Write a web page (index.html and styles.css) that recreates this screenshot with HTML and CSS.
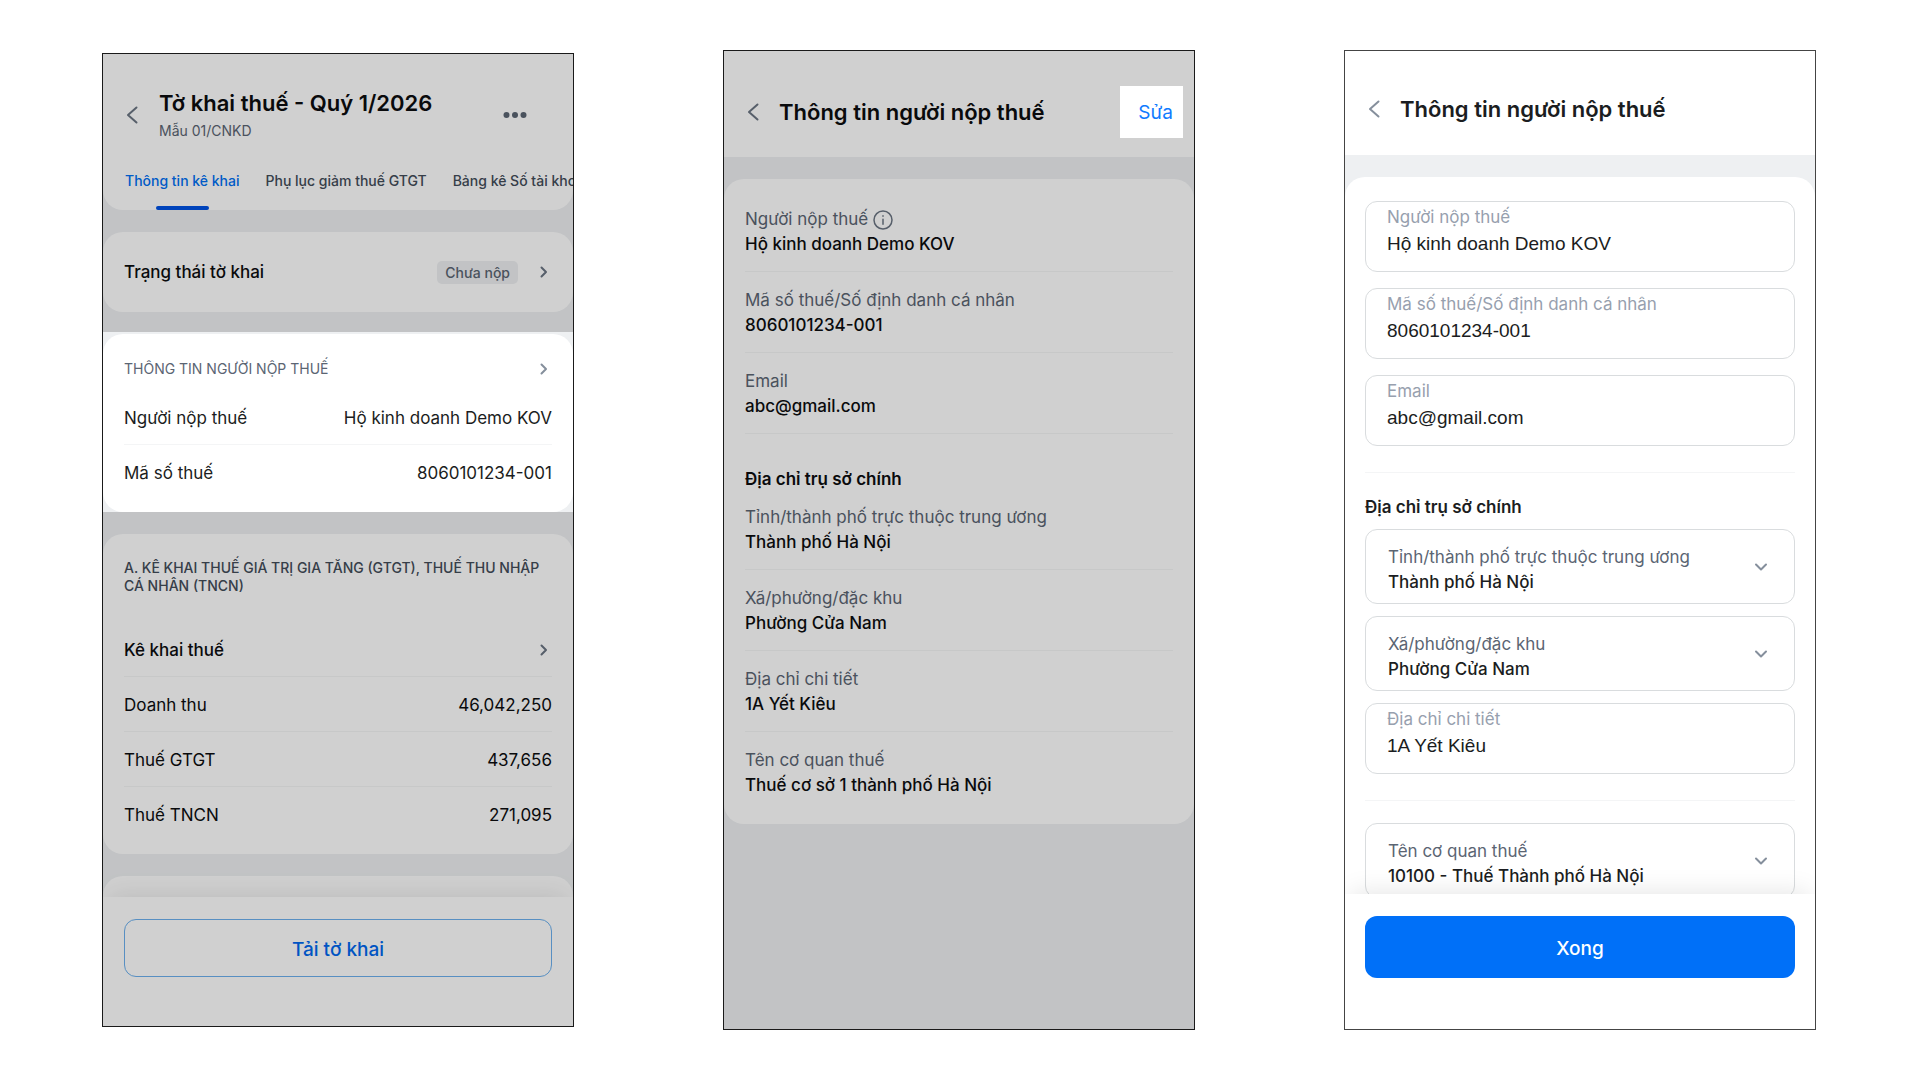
FILE: index.html
```html
<!DOCTYPE html>
<html lang="vi">
<head>
<meta charset="utf-8">
<meta name="viewport" content="width=device-width, initial-scale=1">
<title>Thông tin người nộp thuế</title>
<link rel="stylesheet" href="styles.css">
</head>
<body>
<main class="board">

  <section class="phone phone--short phone--dimmed" aria-label="Tờ khai thuế">
    <header class="summary-head">
      <div class="summary-bar">
        <button class="icon-button" type="button" aria-label="Quay lại">
          <svg class="icon-back" viewBox="0 0 14 20"><path d="M11.500 2.500 3 10l8.500 7.500"/></svg>
        </button>
        <div class="summary-title">
          <h1 class="title">Tờ khai thuế - Quý 1/2026</h1>
          <p class="subtitle">Mẫu 01/CNKD</p>
        </div>
        <button class="icon-button" type="button" aria-label="Thêm">
          <svg class="icon-dots" viewBox="0 0 24 8"><circle cx="3.500" cy="4" r="3"/><circle cx="12" cy="4" r="3"/><circle cx="20.500" cy="4" r="3"/></svg>
        </button>
      </div>
      <nav class="tabs">
        <a class="tab tab--active" href="#ke-khai">Thông tin kê khai</a>
        <a class="tab" href="#phu-luc">Phụ lục giảm thuế GTGT</a>
        <a class="tab" href="#bang-ke">Bảng kê Số tài khoản</a>
      </nav>
    </header>

    <div class="phone-body">
      <div class="card card--status">
        <span class="status-name">Trạng thái tờ khai</span>
        <span class="badge">Chưa nộp</span>
        <svg class="icon-next" viewBox="0 0 18 18"><path d="m7.500 4.500 4.500 4.500-4.500 4.500"/></svg>
      </div>

      <div class="spotlight">
        <div class="card card--rows" id="ke-khai">
          <div class="card-head">
            <h2 class="overline">THÔNG TIN NGƯỜI NỘP THUẾ</h2>
            <svg class="icon-next" viewBox="0 0 18 18"><path d="m7.500 4.500 4.500 4.500-4.500 4.500"/></svg>
          </div>
          <dl class="rows">
            <div class="row"><dt>Người nộp thuế</dt><dd>Hộ kinh doanh Demo KOV</dd></div>
            <div class="row"><dt>Mã số thuế</dt><dd>8060101234-001</dd></div>
          </dl>
        </div>
      </div>

      <div class="card card--rows">
        <h2 class="overline overline--strong">A. KÊ KHAI THUẾ GIÁ TRỊ GIA TĂNG (GTGT), THUẾ THU NHẬP CÁ NHÂN (TNCN)</h2>
        <dl class="rows">
          <div class="row row--lead">
            <dt>Kê khai thuế</dt>
            <dd><svg class="icon-next" viewBox="0 0 18 18"><path d="m7.500 4.500 4.500 4.500-4.500 4.500"/></svg></dd>
          </div>
          <div class="row"><dt>Doanh thu</dt><dd>46,042,250</dd></div>
          <div class="row"><dt>Thuế GTGT</dt><dd>437,656</dd></div>
          <div class="row"><dt>Thuế TNCN</dt><dd>271,095</dd></div>
        </dl>
      </div>

      <div class="card card--next"></div>
    </div>

    <footer class="phone-foot phone-foot--outline">
      <button class="button button--outline" type="button">Tải tờ khai</button>
    </footer>
  </section>

  <section class="phone phone--dimmed" aria-label="Xem thông tin người nộp thuế">
    <header class="page-head page-head--action">
      <button class="icon-button" type="button" aria-label="Quay lại">
        <svg class="icon-back" viewBox="0 0 14 20"><path d="M11.500 2.500 3 10l8.500 7.500"/></svg>
      </button>
      <h1 class="title">Thông tin người nộp thuế</h1>
      <button class="edit" type="button">Sửa</button>
    </header>

    <div class="phone-body">
      <div class="card card--details">
        <dl class="details">
          <div class="detail">
            <dt>Người nộp thuế
              <svg class="icon-info" viewBox="0 0 20 20"><circle cx="10" cy="10" r="9"/><path d="M10 9.200v5M10 5.700v.6"/></svg>
            </dt>
            <dd>Hộ kinh doanh Demo KOV</dd>
          </div>
          <div class="detail"><dt>Mã số thuế/Số định danh cá nhân</dt><dd>8060101234-001</dd></div>
          <div class="detail"><dt>Email</dt><dd>abc@gmail.com</dd></div>
        </dl>
        <h2 class="group-title group-title--details">Địa chỉ trụ sở chính</h2>
        <dl class="details">
          <div class="detail"><dt>Tỉnh/thành phố trực thuộc trung ương</dt><dd>Thành phố Hà Nội</dd></div>
          <div class="detail"><dt>Xã/phường/đặc khu</dt><dd>Phường Cửa Nam</dd></div>
          <div class="detail"><dt>Địa chỉ chi tiết</dt><dd>1A Yết Kiêu</dd></div>
          <div class="detail detail--last"><dt>Tên cơ quan thuế</dt><dd>Thuế cơ sở 1 thành phố Hà Nội</dd></div>
        </dl>
      </div>
    </div>
  </section>

  <form class="phone phone--form" aria-label="Sửa thông tin người nộp thuế">
    <header class="page-head">
      <button class="icon-button" type="button" aria-label="Quay lại">
        <svg class="icon-back" viewBox="0 0 14 20"><path d="M11.500 2.500 3 10l8.500 7.500"/></svg>
      </button>
      <h1 class="title">Thông tin người nộp thuế</h1>
    </header>

    <div class="phone-body">
      <div class="card card--form">
        <div class="field-group field-group--loose">
          <div class="field">
            <label class="field-label" for="payer">Người nộp thuế</label>
            <input class="field-input" id="payer" type="text" value="Hộ kinh doanh Demo KOV">
          </div>
          <div class="field">
            <label class="field-label" for="tax-code">Mã số thuế/Số định danh cá nhân</label>
            <input class="field-input" id="tax-code" type="text" value="8060101234-001">
          </div>
          <div class="field">
            <label class="field-label" for="email">Email</label>
            <input class="field-input" id="email" type="email" value="abc@gmail.com">
          </div>
        </div>

        <hr class="divider">

        <h2 class="group-title group-title--form">Địa chỉ trụ sở chính</h2>
        <div class="field-group">
          <div class="picker">
            <label class="picker-label" for="province">Tỉnh/thành phố trực thuộc trung ương</label>
            <select class="picker-select" id="province"><option>Thành phố Hà Nội</option></select>
            <svg class="icon-down" viewBox="0 0 18 18"><path d="m4 6.500 5 5 5-5"/></svg>
          </div>
          <div class="picker">
            <label class="picker-label" for="ward">Xã/phường/đặc khu</label>
            <select class="picker-select" id="ward"><option>Phường Cửa Nam</option></select>
            <svg class="icon-down" viewBox="0 0 18 18"><path d="m4 6.500 5 5 5-5"/></svg>
          </div>
          <div class="field">
            <label class="field-label" for="street">Địa chỉ chi tiết</label>
            <input class="field-input" id="street" type="text" value="1A Yết Kiêu">
          </div>
        </div>

        <hr class="divider">

        <div class="picker">
          <label class="picker-label" for="office">Tên cơ quan thuế</label>
          <select class="picker-select" id="office"><option>10100 - Thuế Thành phố Hà Nội</option></select>
          <svg class="icon-down" viewBox="0 0 18 18"><path d="m4 6.500 5 5 5-5"/></svg>
        </div>
      </div>
    </div>

    <footer class="phone-foot">
      <button class="button button--primary" type="button">Xong</button>
    </footer>
  </form>

</main>
</body>
</html>
```

FILE: styles.css
```css
:root {
  --surface: #ffffff;
  --canvas: #eef0f2;
  --text: #1b1d21;
  --muted: #5b6573;
  --faint: #97a0ae;
  --line: #f4f5f6;
  --outline: #d9dcde;
  --icon: #858f9c;
  --blue: #0070f4;
  --gutter: 21px;
  --radius: 20px;
}

*,
*::before,
*::after {
  box-sizing: border-box;
}

body {
  margin: 0;
  background: #ffffff;
  color: var(--text);
  font-family: Inter, "Liberation Sans", sans-serif;
  font-size: 17px;
  line-height: 24px;
}

h1,
h2,
p,
dl,
dd {
  margin: 0;
}

button,
input,
select {
  margin: 0;
  padding: 0;
  border: 0;
  background: none;
  color: inherit;
  font: inherit;
}

button {
  cursor: pointer;
}

svg {
  display: block;
  flex: none;
  fill: none;
  stroke: var(--icon);
  stroke-width: 2;
  stroke-linecap: round;
  stroke-linejoin: round;
}

.board {
  display: grid;
  grid-template-columns: repeat(3, 1fr);
  gap: 149px;
  align-items: center;
  min-height: 100vh;
  padding: 0 104px 0 102px;
}

/* Phone frame */

.phone {
  position: relative;
  display: flex;
  flex-direction: column;
  min-width: 0;
  aspect-ratio: 472 / 980;
  overflow: hidden;
  border: 1px solid #1a1a1a;
  background: var(--canvas);
}

.phone--short {
  aspect-ratio: 472 / 974;
}

.phone--form {
  border-color: #444444;
}

.phone--dimmed {
  --text: #0c0d0f;
  --icon: #6b7583;
  color: var(--text);
}

.phone--dimmed::after {
  content: "";
  position: absolute;
  inset: 0;
  z-index: 1;
  background: rgba(0, 0, 0, 0.185);
  pointer-events: none;
}

.phone-body {
  flex: 1;
  min-height: 0;
  overflow: hidden;
}

.phone-foot {
  flex: none;
  padding: 22px 20px 51px;
  background: var(--surface);
  box-shadow: 0 -8px 24px -6px rgba(0, 0, 0, 0.1);
}

.phone-foot--outline {
  padding: 22px 21px 49px;
}

/* Headers */

.title {
  font-size: 22px;
  font-weight: 600;
  line-height: 28px;
}

.subtitle {
  margin-top: 4px;
  color: var(--muted);
  font-size: 14px;
  line-height: 20px;
}

.icon-button {
  flex: none;
}

.icon-back {
  width: 14px;
  height: 20px;
}

.icon-dots {
  width: 24px;
  height: 8px;
  fill: var(--muted);
  stroke: none;
}

.summary-head {
  padding-top: 35px;
  border-radius: 0 0 var(--radius) var(--radius);
  background: var(--surface);
}

.summary-bar {
  display: flex;
  align-items: center;
  gap: 20px;
  padding: 0 46px 0 22px;
}

.summary-title {
  flex: 1;
}

.tabs {
  display: flex;
  gap: 26px;
  margin-top: 30px;
  padding-left: 22px;
  overflow: hidden;
}

.tab {
  display: flex;
  flex: none;
  flex-direction: column;
  align-items: center;
  gap: 15px;
  height: 39px;
  color: #434c59;
  font-size: 14px;
  font-weight: 500;
  line-height: 20px;
  text-decoration: none;
  white-space: nowrap;
}

.tab--active {
  color: var(--blue);
}

.tab--active::after {
  content: "";
  width: 53px;
  height: 4px;
  border-radius: 2px;
  background: #0053e6;
}

.page-head {
  display: flex;
  flex: none;
  align-items: center;
  gap: 19px;
  padding: 44px 22px 32px;
  background: var(--surface);
}

.page-head--action {
  padding: 35px 11px 19px 22px;
}

.edit {
  position: relative;
  z-index: 2;
  margin-left: auto;
  padding: 15px 10px 13px 18px;
  background: var(--surface);
  color: #0f7bff;
  font-size: 19px;
  line-height: 24px;
}

/* Cards */

.card {
  padding: 0 var(--gutter);
  border-radius: var(--radius);
  background: var(--surface);
}

.card--status {
  display: flex;
  align-items: center;
  gap: 16px;
  margin: 22px 0 20px;
  padding: 28px 21px;
}

.status-name {
  flex: 1;
  font-weight: 500;
}

.badge {
  padding: 2px 8px;
  border-radius: 5px;
  background: var(--canvas);
  color: var(--muted);
  font-size: 14px;
  font-weight: 500;
  line-height: 19px;
}

.spotlight {
  --text: #1b1d21;
  --icon: #858f9c;
  position: relative;
  z-index: 2;
  margin-bottom: 22px;
  padding-top: 2px;
  background: var(--canvas);
  color: var(--text);
}

.card--rows {
  padding-top: 25px;
  padding-bottom: 12px;
}

.card-head {
  display: flex;
  align-items: center;
  justify-content: space-between;
  margin-bottom: 11px;
}

.overline {
  color: var(--muted);
  font-size: 14px;
  font-weight: 400;
  line-height: 20px;
}

.overline--strong {
  margin-bottom: 27px;
  color: #434c59;
  font-weight: 500;
  line-height: 18px;
}

.row {
  display: flex;
  align-items: center;
  justify-content: space-between;
  height: 55px;
  padding-top: 2px;
  border-bottom: 1px solid var(--line);
}

.row:last-child {
  border-bottom-color: transparent;
}

.row--lead {
  font-weight: 500;
}

.icon-next,
.icon-down {
  width: 18px;
  height: 18px;
}

.card--next {
  height: 80px;
  margin-top: 22px;
}

/* Read-only details */

.card--details {
  margin-top: 22px;
  padding-top: 12px;
  padding-bottom: 12px;
}

.detail {
  padding: 16px 0 14px;
  border-bottom: 1px solid var(--line);
  line-height: 25px;
}

.detail--last {
  border-bottom: 0;
}

.detail dt {
  display: flex;
  align-items: center;
  gap: 5px;
  color: var(--muted);
}

.detail dd {
  font-weight: 500;
}

.icon-info {
  width: 20px;
  height: 20px;
  stroke-width: 1.500;
}

.group-title {
  font-size: 17px;
  font-weight: 600;
}

.group-title--details {
  margin-top: 35px;
  line-height: 20px;
}

.group-title--form {
  margin-bottom: 10px;
  line-height: 24px;
}

/* Form */

.card--form {
  margin-top: 22px;
  padding: 24px 20px;
}

.field-group {
  display: grid;
  gap: 12px;
}

.field-group--loose {
  gap: 16px;
}

.field,
.picker {
  border: 1px solid var(--outline);
  border-radius: 12px;
}

.field {
  display: grid;
  gap: 5px;
  padding: 5px 21px 15px;
}

.field-label {
  color: var(--faint);
  line-height: 20px;
}

.field-input {
  width: 100%;
  height: 24px;
  font-family: "Liberation Sans", Arial, sans-serif;
  font-size: 19px;
  line-height: 24px;
}

.picker {
  display: grid;
  grid-template-columns: 1fr auto;
  align-items: center;
  padding: 0 24px 0 22px;
}

.picker-label {
  grid-area: 1 / 1;
  padding-top: 15px;
  color: var(--muted);
  line-height: 25px;
}

.picker-select {
  grid-area: 2 / 1;
  height: 33px;
  padding-bottom: 8px;
  appearance: none;
  font-weight: 500;
  line-height: 25px;
}

.icon-down {
  grid-area: 1 / 2 / span 2;
}

.divider {
  height: 1px;
  margin: 26px 0 22px;
  border: 0;
  background: var(--line);
}

.button {
  width: 100%;
  padding-top: 3px;
  border-radius: 12px;
  font-size: 19px;
  font-weight: 500;
}

.button--outline {
  height: 58px;
  border: 1px solid #6cb0ee;
  color: #0068f0;
}

.button--primary {
  height: 62px;
  background: #0070f8;
  color: #ffffff;
}

@media (max-width: 1500px) {
  .board {
    grid-template-columns: minmax(0, 472px);
    justify-content: center;
    gap: 48px;
    padding: 48px 16px;
  }
}
```
